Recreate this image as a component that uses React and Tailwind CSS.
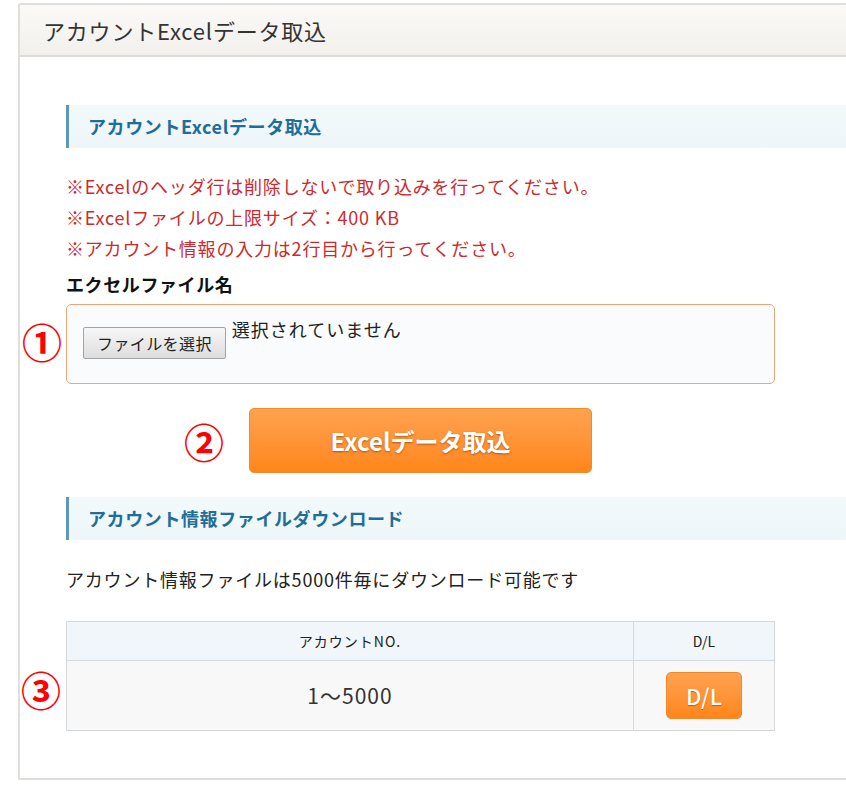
import React from 'react';

const font = { fontFamily: '"Noto Sans CJK JP", "Noto Sans", sans-serif' };

const SectionTitle = ({ children }) => (
  <div className="h-[43px] flex items-center border-l-[3px] border-[#5d98b9] bg-gradient-to-b from-[#f1f9fb] to-[#eef6f9] pl-[19px]">
    <span className="text-[18px] font-bold tracking-[0.6px] text-[#1f6e99]">{children}</span>
  </div>
);

const Mark = ({ children, className }) => (
  <span className={`text-[40px] leading-none font-bold text-[#ff0000] ${className}`}>{children}</span>
);

export default function App() {
  return (
    <div className="w-[846px] h-[785px] overflow-hidden bg-white text-[#333]" style={font}>
      <div className="ml-[18px] mt-[3px] border-l-2 border-y-2 border-[#dfdfdc] rounded-tl-[3px]">
        {/* panel header */}
        <div className="h-[52px] flex items-center pl-[23px] bg-gradient-to-b from-[#fbfaf8] to-[#f1f0ec] border-b-2 border-[#dcdcd6]">
          <h1 className="text-[22px] tracking-[0.8px] text-[#333]">アカウントExcelデータ取込</h1>
        </div>

        <div className="pl-[46px] pt-[48px] pb-[47px]">
          <SectionTitle>アカウントExcelデータ取込</SectionTitle>

          <ul className="mt-[23px] text-[18px] leading-[31px] tracking-[0.8px] text-[#cc2a2e]">
            <li>※Excelのヘッダ行は削除しないで取り込みを行ってください。</li>
            <li>※Excelファイルの上限サイズ：400 KB</li>
            <li>※アカウント情報の入力は2行目から行ってください。</li>
          </ul>

          <div className="mt-[5px] text-[18px] leading-[31px] font-bold tracking-[0.6px] text-[#111]">エクセルファイル名</div>

          <div className="relative mt-[4px] w-[709px] h-[80px] rounded-[5px] border-[1.5px] border-[#e8a77d] bg-[#fafbfc] flex items-start pl-[16px] pt-[9px]">
            <Mark className="absolute -left-[45px] top-[16px]">①</Mark>
            <button className="mt-[13px] h-[32px] px-[13px] rounded-[2px] border border-[#a3a3a3] bg-gradient-to-b from-[#f7f7f7] to-[#dddddd] text-[16px] tracking-[0.4px] text-[#222] leading-none">
              ファイルを選択
            </button>
            <span className="ml-[6px] text-[18px] leading-[31px] tracking-[1px] text-[#222]">選択されていません</span>
          </div>

          <div className="mt-[24px] flex items-center">
            <Mark className="ml-[118px]">②</Mark>
            <button className="ml-[25px] w-[343px] h-[65px] rounded-[5px] border border-[#f08a2c] bg-gradient-to-b from-[#ffa24e] to-[#ff8617] text-white text-[24px] font-bold [text-shadow:0_1px_2px_rgba(120,50,0,0.6)]">
              Excelデータ取込
            </button>
          </div>

          <div className="mt-[24px]">
            <SectionTitle>アカウント情報ファイルダウンロード</SectionTitle>
          </div>

          <p className="mt-[24px] text-[18px] leading-[31px] tracking-[0.8px] text-[#222]">
            アカウント情報ファイルは5000件毎にダウンロード可能です
          </p>

          <div className="relative mt-[26px] w-[709px] border border-[#d6d9db]">
            <Mark className="absolute -left-[46px] top-[47px]">③</Mark>
            <div className="flex h-[39px] bg-[#f0f6f9] border-b border-[#d6d9db] text-[14px] text-[#222]">
              <div className="w-[567px] border-r border-[#d6d9db] flex items-center justify-center tracking-[1px]">アカウントNO.</div>
              <div className="flex-1 flex items-center justify-center">D/L</div>
            </div>
            <div className="flex h-[69px] bg-[#f8f8f8]">
              <div className="w-[567px] border-r border-[#d6d9db] flex items-center justify-center text-[21px] tracking-[1px] text-[#333]">
                1～5000
              </div>
              <div className="flex-1 flex items-center justify-center">
                <button className="w-[76px] h-[47px] rounded-[5px] border border-[#f08a2c] bg-gradient-to-b from-[#ffa24e] to-[#ff8617] text-white text-[22px] font-medium [text-shadow:0_1px_1px_rgba(120,50,0,0.5)]">
                  D/L
                </button>
              </div>
            </div>
          </div>
        </div>
      </div>
    </div>
  );
}
